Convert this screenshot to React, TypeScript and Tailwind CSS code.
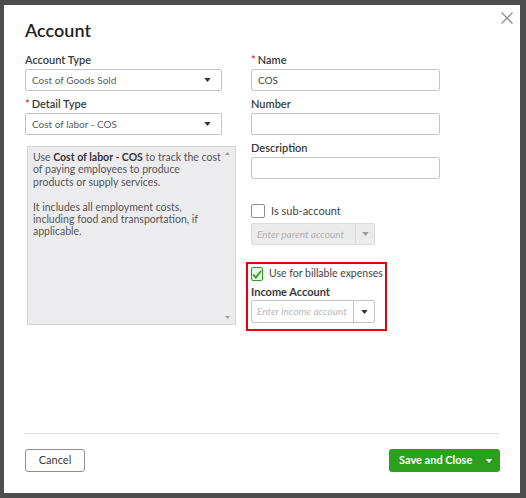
import React from "react";

const font = { fontFamily: "Lato, 'Open Sans', sans-serif" };

function Caret({ className = "" }: { className?: string }) {
  return (
    <svg width="8" height="5" viewBox="0 0 8 5" className={className}>
      <path d="M0 0h8L4 5z" fill="currentColor" />
    </svg>
  );
}

function Label({ children, req }: { children: React.ReactNode; req?: boolean }) {
  return (
    <div className="h-[14px] text-[11px] font-semibold leading-[14px] text-[#393a3d]">
      {req && <span className="mr-[2px] text-[#d52b1e]">*</span>}
      {children}
    </div>
  );
}

function Select({ value }: { value: string }) {
  return (
    <div className="mt-[2px] flex h-[22px] w-[197px] items-center justify-between rounded-[2px] border border-[#c4c4c4] bg-white pl-[6px] pr-[10px] text-[10px] text-[#5c5d61]">
      <span>{value}</span>
      <Caret className="h-[4px] w-[7px] text-[#333]" />
    </div>
  );
}

function Input({ value = "" }: { value?: string }) {
  return (
    <div className="mt-[2px] flex h-[22px] w-[189px] items-center rounded-[2px] border border-[#c4c4c4] bg-white px-[6px] text-[10px] text-[#444]">
      {value}
    </div>
  );
}

export default function App() {
  return (
    <div style={font} className="h-[498px] w-[526px] overflow-hidden bg-[#4d4d4d] pl-[4px] pr-[6px] pt-[5px]">
      <div className="relative flex h-[488px] flex-col bg-white px-[21px]">
        <button className="absolute right-[7px] top-[7px] text-[#8d9096]">
          <svg width="12" height="12" viewBox="0 0 12 12">
            <path d="M0.5 0.5l11 11M11.5 0.5l-11 11" stroke="currentColor" strokeWidth="1.3" />
          </svg>
        </button>

        <h1 className="mt-[14px] text-[18px] font-semibold leading-[22px] text-[#222]">Account</h1>

        <div className="mt-[12px] flex gap-[29px]">
          {/* left column */}
          <div className="w-[197px]">
            <Label>Account Type</Label>
            <Select value="Cost of Goods Sold" />
            <div className="mt-[6px]">
              <Label req>Detail Type</Label>
            </div>
            <Select value="Cost of labor - COS" />
            <div className="relative ml-[2px] mt-[11px] h-[179px] w-[209px] border border-[#d4d4d4] bg-[#ececee] pl-[5px] pr-[14px] pt-[4px] text-[10.5px] leading-[12.3px] text-[#555]">
              <p>
                Use <b className="text-[#333]">Cost of labor - COS</b> to track the cost of paying employees to produce products or supply services.
              </p>
              <p className="mt-[13px]">It includes all employment costs, including food and transportation, if applicable.</p>
              <Caret className="absolute right-[5px] top-[5px] h-[3px] w-[5px] rotate-180 text-[#999]" />
              <Caret className="absolute bottom-[5px] right-[5px] h-[3px] w-[5px] text-[#999]" />
            </div>
          </div>

          {/* right column */}
          <div className="w-[190px]">
            <Label req>Name</Label>
            <Input value="COS" />
            <div className="mt-[6px]">
              <Label>Number</Label>
            </div>
            <Input />
            <div className="mt-[6px]">
              <Label>Description</Label>
            </div>
            <Input />

            <div className="mt-[25px] flex h-[14px] items-center gap-[6px]">
              <div className="h-[14px] w-[14px] rounded-[2px] border border-[#8d9096] bg-white" />
              <span className="text-[11px] text-[#444]">Is sub-account</span>
            </div>
            <div className="mt-[5px] flex h-[22px] w-[124px] items-center rounded-[2px] border border-[#dcdcdc] bg-[#ebebeb] text-[10px] italic text-[#b0b0b0]">
              <span className="flex-1 pl-[5px]">Enter parent account</span>
              <span className="flex h-full w-[19px] items-center justify-center border-l border-[#dcdcdc]">
                <Caret className="h-[4px] w-[7px] text-[#999]" />
              </span>
            </div>

            <div className="-ml-[5px] mt-[17px] h-[69px] w-[141px] border-2 border-[#e8000b] px-[3px] pt-[3px]">
              <div className="flex h-[14px] items-center gap-[6px]">
                <div className="flex h-[14px] w-[14px] items-center justify-center rounded-[2px] border border-[#2ca01c] bg-[#e9f5e6]">
                  <svg width="10" height="9" viewBox="0 0 10 9">
                    <path d="M1 4.5l2.8 3L9 1" fill="none" stroke="#2ca01c" strokeWidth="1.8" />
                  </svg>
                </div>
                <span className="whitespace-nowrap text-[10.5px] text-[#444]">Use for billable expenses</span>
              </div>
              <div className="mt-[4px] text-[11px] font-bold leading-[14px] text-[#393a3d]">Income Account</div>
              <div className="mt-[1px] flex h-[23px] w-[124px] items-center rounded-[2px] border border-[#c4c4c4] bg-white text-[10px] italic text-[#b8b8b8]">
                <span className="flex-1 pl-[5px]">Enter income account</span>
                <span className="flex h-full w-[21px] items-center justify-center border-l border-[#c4c4c4]">
                  <Caret className="h-[4px] w-[7px] text-[#333]" />
                </span>
              </div>
            </div>
          </div>
        </div>

        <div className="mt-auto border-t border-[#dcdcdc] pb-[21px] pt-[15px]">
          <div className="flex items-center justify-between">
            <button className="h-[23px] w-[60px] rounded-[3px] border border-[#8d9096] text-[11px] text-[#393a3d]">Cancel</button>
            <div className="mr-[-1px] flex h-[23px] w-[111px] items-center rounded-[3px] bg-[#2ca01c] text-white">
              <span className="flex-1 pl-[10px] text-[11px] font-bold">Save and Close</span>
              <Caret className="mr-[7px] h-[4px] w-[8px]" />
            </div>
          </div>
        </div>
      </div>
    </div>
  );
}
